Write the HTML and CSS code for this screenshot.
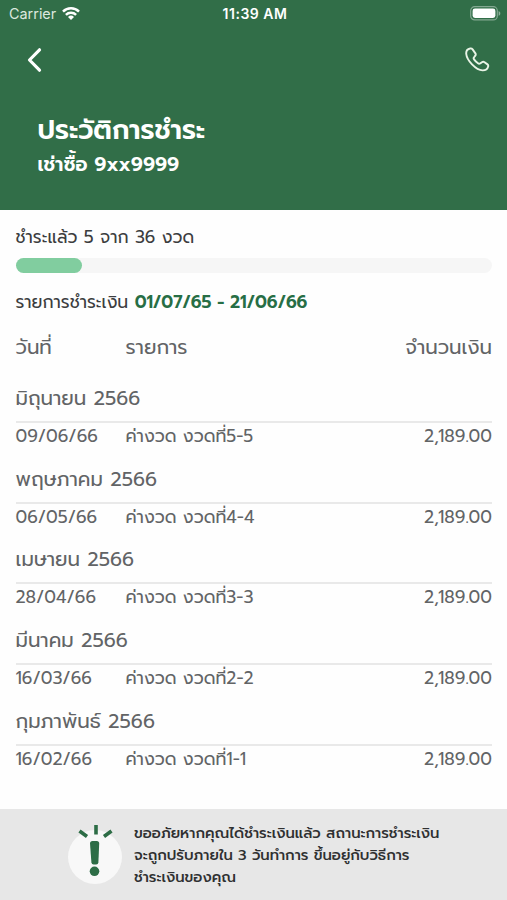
FILE: index.html
```html
<!DOCTYPE html>
<html lang="th">
<head>
    <meta charset="UTF-8">
    <meta name="viewport" content="width=device-width, initial-scale=1.0">
    <title>ประวัติการชำระ</title>
    <link rel="stylesheet" href="styles.css">
</head>
<body>

    <header>
        <div class="status-bar">
            <div class="carrier">
                <span>Carrier</span>
                <svg width="18" height="14" viewBox="0 0 18 14" fill="none" stroke="#fff" stroke-width="2.5">
                    <path d="M1 4.600a11.400 11.400 0 0 1 16 0"/>
                    <path d="M3.900 7.900a7.300 7.300 0 0 1 10.200 0"/>
                    <path d="M9 13.100l-3-3.100a4.300 4.300 0 0 1 6 0z" fill="#fff" stroke="none"/>
                </svg>
            </div>
            <div class="time">11:39 AM</div>
            <div class="battery">
                <svg width="31" height="15" viewBox="0 0 31 15">
                    <rect x="0.7" y="0.7" width="26.6" height="13.2" rx="4" fill="none" stroke="#fff" stroke-opacity="0.4" stroke-width="1.2"/>
                    <rect x="2.6" y="2.6" width="22.8" height="9.4" rx="2.4" fill="#fff"/>
                    <path d="M28.6 5v4.8c1-.4 1.7-1.300 1.700-2.400s-.7-2-1.700-2.400z" fill="#fff" fill-opacity="0.45"/>
                </svg>
            </div>
        </div>
        <nav>
            <a href="#" class="back">
                <svg width="16" height="26" viewBox="0 0 16 26" fill="none" stroke="#fff" stroke-width="3.200" stroke-linecap="round" stroke-linejoin="round">
                    <path d="M13.500 2.800L3.500 13l10 10.200"/>
                </svg>
            </a>
            <a href="#" class="call">
                <svg width="25" height="25" viewBox="0 0 26 26" fill="none" stroke="#e9f4e6" stroke-width="2" stroke-linejoin="round">
                    <path d="M5.400 1.500C2.600 2 1 4.300 1.300 7.300c.3 3.600 2.700 7.300 6 10.800 3.500 3.600 7.200 6.100 10.900 6.200 3 .1 5.200-1.500 5.900-4.100.2-.8 0-1.600-.7-2.100l-3.100-2.300c-.9-.6-1.800-.6-2.700 0l-1.900 1.400c-.8.5-1.500.4-2.200-.2-1.600-1.200-3-2.600-4.100-4.100-.6-.8-.6-1.500 0-2.200l1.300-1.700c.6-.8.6-1.600.1-2.400L7.900 2.500c-.6-.8-1.400-1.200-2.500-1z"/>
                </svg>
            </a>
        </nav>
        <h1>ประวัติการชำระ</h1>
        <h2>เช่าซื้อ 9xx9999</h2>
    </header>

    <main>
        <p class="paid">ชำระแล้ว 5 จาก 36 งวด</p>
        <div class="progress"><div class="progress-bar"></div></div>
        <p class="period">รายการชำระเงิน <b>01/07/65 - 21/06/66</b></p>

        <div class="row table-head">
            <span>วันที่</span>
            <span>รายการ</span>
            <span>จำนวนเงิน</span>
        </div>

        <section>
            <h3>มิถุนายน 2566</h3>
            <div class="row"><span>09/06/66</span><span>ค่างวด งวดที่5-5</span><span>2,189.00</span></div>
        </section>
        <section>
            <h3>พฤษภาคม 2566</h3>
            <div class="row"><span>06/05/66</span><span>ค่างวด งวดที่4-4</span><span>2,189.00</span></div>
        </section>
        <section>
            <h3>เมษายน 2566</h3>
            <div class="row"><span>28/04/66</span><span>ค่างวด งวดที่3-3</span><span>2,189.00</span></div>
        </section>
        <section>
            <h3>มีนาคม 2566</h3>
            <div class="row"><span>16/03/66</span><span>ค่างวด งวดที่2-2</span><span>2,189.00</span></div>
        </section>
        <section>
            <h3>กุมภาพันธ์ 2566</h3>
            <div class="row"><span>16/02/66</span><span>ค่างวด งวดที่1-1</span><span>2,189.00</span></div>
        </section>
    </main>

    <footer>
        <svg width="56" height="62" viewBox="0 0 56 62">
            <circle cx="27" cy="34" r="27" fill="#f8f8f8"/>
            <g stroke="#2d6d46" stroke-width="3.600">
                <path d="M11.500 8l7.500 5.500M28 2v9.500M43.500 8l-7.500 5.500"/>
            </g>
            <path d="M22 20.500q0-2.500 2.500-2.500h4.200q2.500 0 2.500 2.500l-.8 18.800q-.2 2.200-2.200 2.200h-2.600q-2 0-2.200-2.200z" fill="#2d6d46"/>
            <circle cx="26.500" cy="48.300" r="4.800" fill="#2d6d46"/>
        </svg>
        <div class="note">
            <p>ขออภัยหากคุณได้ชำระเงินแล้ว สถานะการชำระเงิน</p>
            <p>จะถูกปรับภายใน 3 วันทำการ ขึ้นอยู่กับวิธีการ</p>
            <p>ชำระเงินของคุณ</p>
        </div>
    </footer>

</body>
</html>
```
FILE: styles.css
```css
body {
    font-family: "Prompt", "Inter", "Noto Sans Thai", sans-serif;
    margin: 0;
    height: 900px;
    display: flex;
    flex-direction: column;
    background-color: #fefefe;
    color: #3c3d3e;
    overflow: hidden;
}
h1, h2, h3, p {
    margin: 0;
    white-space: nowrap;
}
svg {
    display: block;
    flex: none;
}
header {
    box-sizing: border-box;
    height: 210px;
    background-color: #316e48;
    color: white;
}
.status-bar {
    display: grid;
    grid-template-columns: 1fr auto 1fr;
    align-items: center;
    height: 27px;
    padding: 0 6px 0 9px;
    font-family: "Inter", sans-serif;
    font-size: 14.4px;
}
.carrier {
    display: flex;
    align-items: center;
    gap: 6px;
    color: #dbe8df;
}
.time {
    font-weight: 600;
    font-size: 14px;
    letter-spacing: 0.5px;
}
.battery {
    justify-self: end;
}
nav {
    display: flex;
    justify-content: space-between;
    align-items: center;
    height: 65px;
    padding: 0 17px 0 26px;
}
h1 {
    padding: 18px 0 0 37.5px;
    font-size: 26.8px;
    line-height: 41px;
    font-weight: 600;
}
h2 {
    padding-left: 37.5px;
    font-size: 19.4px;
    line-height: 28px;
    font-weight: 600;
}
main {
    flex: 1;
    padding: 14px 15px 0 15.5px;
}
.paid, .period {
    font-size: 17.3px;
    line-height: 26px;
}
.progress {
    height: 15px;
    margin: 8px 0 16px;
    border-radius: 8px;
    background-color: #f6f6f6;
}
.progress-bar {
    width: 66.5px;
    height: 15px;
    border-radius: 8px;
    background-color: #81cd9f;
}
.period b {
    color: #276e45;
    font-weight: 600;
    letter-spacing: -0.13px;
}
.row {
    display: grid;
    grid-template-columns: 110px 1fr auto;
    height: 29px;
    line-height: 27px;
    font-size: 17.4px;
    color: #626466;
    white-space: nowrap;
}
.table-head {
    height: 38px;
    margin-top: 19px;
    font-size: 19.8px;
}
section {
    height: 80.7px;
}
h3 {
    box-sizing: border-box;
    height: 51px;
    padding-top: 11px;
    border-bottom: 2px solid #e9e9e9;
    font-size: 19.8px;
    line-height: 30px;
    font-weight: 400;
    color: #626466;
}
footer {
    box-sizing: border-box;
    height: 91px;
    padding: 14px 0 0 68px;
    display: flex;
    gap: 10px;
    background-color: #e7e7e7;
    color: #2f3031;
}
.note {
    font-size: 14.7px;
    line-height: 22px;
    font-weight: 500;
    margin-top: -1px;
}
```
